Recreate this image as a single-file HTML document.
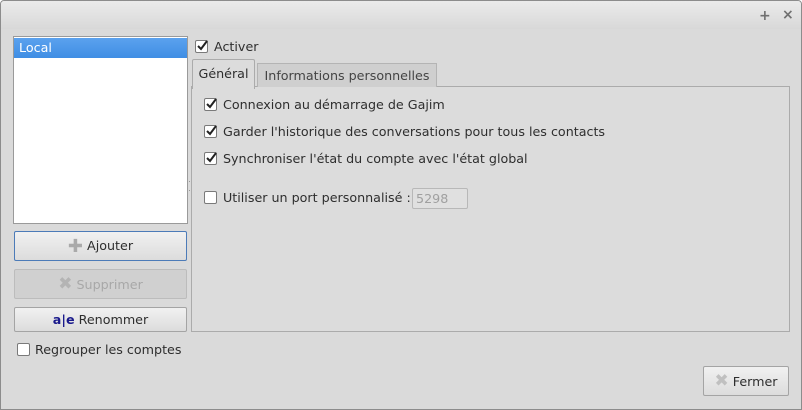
<!DOCTYPE html>
<html><head><style>
body{margin:0;width:802px;height:410px;overflow:hidden;background:#fff;font-family:"DejaVu Sans","Liberation Sans",sans-serif;font-size:12.7px;color:#2e2e2e}
.win{position:absolute;left:0;top:0;width:800px;height:408px;border:1px solid #8c8c8c;border-radius:4px 4px 0 0;background:#dadada;overflow:hidden}
.title{position:absolute;left:0;top:0;width:800px;height:28px;background:linear-gradient(#ebebeb,#d8d8d8)}
.a{position:absolute;white-space:nowrap}
.cb{position:absolute;width:11px;height:11px;border:1px solid #7a7a7a;border-radius:2px;background:#fff}
.cb svg{position:absolute;left:0;top:-1px}
.btn{position:absolute;border:1px solid #a4a4a4;border-radius:2px;background:linear-gradient(#f1f1f1,#dcdcdc);box-sizing:border-box;text-align:center;white-space:nowrap}
</style></head><body>
<div class="win">
<div class="title"></div>
<div class="a" style="left:758px;top:7px;color:#707070;font-size:14px;font-weight:bold">+</div>
<div class="a" style="left:781px;top:6px;color:#707070;font-size:14px;font-weight:bold">×</div>

<div class="a" style="left:12px;top:35px;width:173px;height:186px;background:#fff;border:1px solid #9a9a9a"></div>
<div class="a" style="left:13px;top:37px;width:173px;height:20px;background:linear-gradient(#5ba2ee,#3f8ee4);color:#fff;line-height:20px;padding-left:5px;box-sizing:border-box">Local</div>

<div class="btn" style="left:13px;top:230px;width:173px;height:30px;border-color:#4c7bb8;line-height:28px"><span style="color:#aaa;font-size:18px;font-weight:bold;vertical-align:-2px">✚</span> Ajouter</div>
<div class="btn" style="left:13px;top:268px;width:173px;height:30px;background:#d0d0d0;border-color:#bcbcbc;color:#a8a8a8;line-height:28px"><span style="color:#b4b4b4;font-size:17px;font-weight:bold">✖</span> Supprimer</div>
<div class="btn" style="left:13px;top:306px;width:173px;height:25px;line-height:23px"><span style="color:#1a1a8c;font-weight:bold">a|e</span> Renommer</div>

<div class="cb" style="left:16px;top:342px"></div>
<div class="a" style="left:34px;top:341px">Regrouper les comptes</div>

<div class="cb" style="left:194px;top:39px"><svg width="12" height="12"><path d="M2 6l3 3 6-8" stroke="#222" stroke-width="2" fill="none"/></svg></div>
<div class="a" style="left:213px;top:38px">Activer</div>

<div class="a" style="left:190px;top:85px;width:597px;height:244px;border:1px solid #ababab;background:#dcdcdc"></div>
<div class="a" style="left:191px;top:58px;width:61px;height:29px;border:1px solid #ababab;border-bottom:none;background:#dcdcdc;border-radius:2px 2px 0 0;text-align:center;line-height:28px">Général</div>
<div class="a" style="left:256px;top:62px;width:178px;height:23px;border:1px solid #b4b4b4;border-bottom:none;background:#cfcfcf;text-align:center;line-height:24px;color:#444">Informations personnelles</div>

<div class="cb" style="left:203px;top:97px"><svg width="12" height="12"><path d="M2 6l3 3 6-8" stroke="#222" stroke-width="2" fill="none"/></svg></div>
<div class="a" style="left:222px;top:96px">Connexion au démarrage de Gajim</div>
<div class="cb" style="left:203px;top:124px"><svg width="12" height="12"><path d="M2 6l3 3 6-8" stroke="#222" stroke-width="2" fill="none"/></svg></div>
<div class="a" style="left:222px;top:123px">Garder l'historique des conversations pour tous les contacts</div>
<div class="cb" style="left:203px;top:151px"><svg width="12" height="12"><path d="M2 6l3 3 6-8" stroke="#222" stroke-width="2" fill="none"/></svg></div>
<div class="a" style="left:222px;top:150px">Synchroniser l'état du compte avec l'état global</div>
<div class="cb" style="left:203px;top:190px"></div>
<div class="a" style="left:222px;top:189px">Utiliser un port personnalisé :</div>
<div class="a" style="left:411px;top:187px;border:1px solid #b8b8b8;border-radius:2px;background:#e0e0e0;color:#a0a0a0;line-height:19px;padding-left:3px;box-sizing:border-box;width:56px;height:21px">5298</div>

<div class="a" style="left:186px;top:180px;width:3px;height:8px;border-top:1px dotted #999;border-bottom:1px dotted #999"></div>

<div class="btn" style="left:702px;top:365px;width:86px;height:30px;line-height:28px"><span style="color:#c0c0c0;font-size:17px;font-weight:bold">✖</span> Fermer</div>
</div>
</body></html>
